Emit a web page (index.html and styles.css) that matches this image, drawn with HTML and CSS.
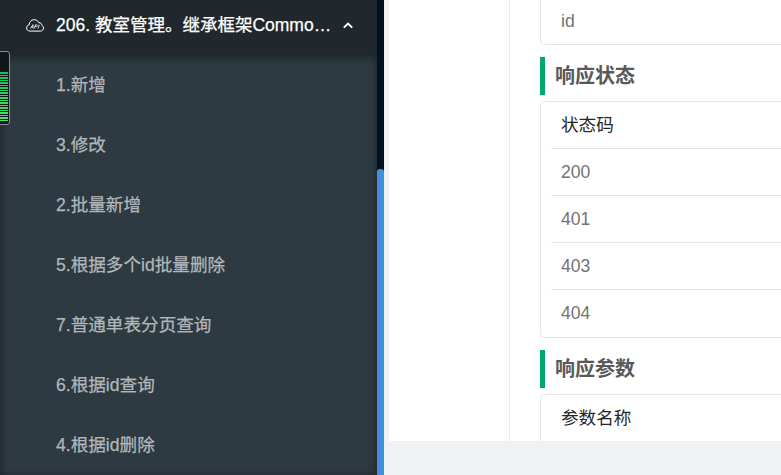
FILE: index.html
```html
<!DOCTYPE html>
<html lang="zh-CN">
<head>
<meta charset="utf-8">
<title>API</title>
<link rel="stylesheet" href="styles.css">
</head>
<body>
<div class="app">
  <aside class="sidebar">
    <div class="menu">
      <div class="menu-title">
        <svg class="cloud" viewBox="0 0 18 13" fill="none" stroke="currentColor">
          <path d="M4.4 12.1C1.9 12.1.6 10.7.6 8.9.6 7.2 1.7 6 3.2 5.8 3.3 3 5.2.7 8 .7c2.200 0 3.900 1.100 4.700 3 2-.1 3.100 1 3.200 2.700 1 .5 1.600 1.400 1.600 2.500 0 1.900-1.400 3.200-3.300 3.200z"/>
          <path class="cloud-mark" d="M4.500 9.500 7 5.600v3.900M5.300 8h1.900M8.300 9.500l1.200-3.700h1.300c1 0 .8 1.800-.4 1.800H9M12 9.500l1.300-3.700"/>
        </svg>
        <span class="menu-label">206. 教室管理。继承框架Commo…</span>
        <svg class="chevron" viewBox="0 0 10 7" fill="none" stroke="currentColor"><path d="M.8 5.600 5 1.600l4.200 4"/></svg>
      </div>
      <ul class="submenu">
        <li>1.新增</li>
        <li>3.修改</li>
        <li>2.批量新增</li>
        <li>5.根据多个id批量删除</li>
        <li>7.普通单表分页查询</li>
        <li>6.根据id查询</li>
        <li>4.根据id删除</li>
      </ul>
    </div>
    <div class="scroll-track"><div class="scroll-thumb"></div></div>
    <div class="meter"><div class="meter-level"></div></div>
  </aside>
  <main class="content">
    <div class="tabs-side"></div>
    <div class="doc">
      <div class="table table-first"><div class="row">id</div></div>
      <h3>响应状态</h3>
      <div class="table">
        <div class="row head">状态码</div>
        <div class="row">200</div>
        <div class="row">401</div>
        <div class="row">403</div>
        <div class="row">404</div>
      </div>
      <h3>响应参数</h3>
      <div class="table table-open">
        <div class="row head">参数名称</div>
      </div>
    </div>
  </main>
</div>
</body>
</html>
```
FILE: styles.css
```css
* { box-sizing: border-box; }
body {
  margin: 0;
  overflow: hidden;
  font: 17.6px "Liberation Sans", "Noto Sans CJK SC", sans-serif;
  background: #f0f1f5;
}
.app { display: flex; height: 475px; }
.sidebar { position: relative; display: flex; width: 384px; flex: none; }
.menu { width: 377px; background: #20282d; overflow: hidden; }
.menu-title {
  display: flex;
  align-items: center;
  height: 50px;
  margin-bottom: 5px;
  padding-left: 26px;
  color: #fff;
}
.cloud { width: 18px; height: 13px; margin-right: 12px; flex: none; }
.cloud-mark { stroke-width: .8; }
.menu-label {
  width: 276px;
  flex: none;
  white-space: nowrap;
  line-height: 50px;
  font-size: 17.5px;
  -webkit-text-stroke: .25px;
}
.chevron { width: 10px; height: 7px; margin-left: 11px; stroke-width: 2; }
.submenu {
  height: 420px;
  margin: 0;
  padding: 5px 0 0 56px;
  list-style: none;
  background: #2d3a41;
  box-shadow: inset 0 2px 8px rgba(0, 0, 0, .45);
  color: #b2b7ba;
  -webkit-text-stroke: .25px;
}
.submenu li { height: 50px; margin-bottom: 10px; line-height: 50px; white-space: nowrap; }
.scroll-track { width: 7px; background: #001222; padding-top: 169px; }
.scroll-thumb { height: 306px; background: #4090df; border-radius: 3px 3px 0 0; }
.meter {
  position: absolute;
  left: -2px;
  top: 51px;
  width: 12px;
  height: 74px;
  padding: 20px 1px 2px;
  background: #101719;
  border: 1px solid #899093;
  border-radius: 3px;
}
.meter-level {
  width: 8px;
  height: 49px;
  background: repeating-linear-gradient(transparent 0 2px, #101719 2px 3px, transparent 3px 4px, #101719 4px 5px), linear-gradient(#16c253, #4be36b);
}
.content {
  display: flex;
  width: 392px;
  height: 441px;
  margin-left: 5px;
  background: #fff;
  overflow: hidden;
}
.tabs-side { width: 121px; flex: none; border-right: 1px solid #e8e8e8; }
.doc { flex: 1; padding-left: 30px; color: #737373; }
.table {
  padding-left: 10px;
  border: 1px solid #e6e6e6;
  border-right: 0;
  border-radius: 5px 0 0 5px;
}
.table-first { height: 45px; border-top: 0; border-radius: 0 0 0 5px; }
.table-open { border-bottom: 0; border-radius: 5px 0 0 0; }
.row { height: 47px; padding-left: 10px; line-height: 46px; border-bottom: 1px solid #e6e6e6; }
.row:last-child { border-bottom: 0; }
.table-first .row { height: 44px; line-height: 42px; }
.head { color: #262626; }
h3 {
  height: 38px;
  margin: 12px 0 6px;
  padding-left: 10px;
  border-left: 5px solid #00a870;
  font-size: 20px;
  line-height: 38px;
  font-weight: bold;
  color: #595959;
}
```
